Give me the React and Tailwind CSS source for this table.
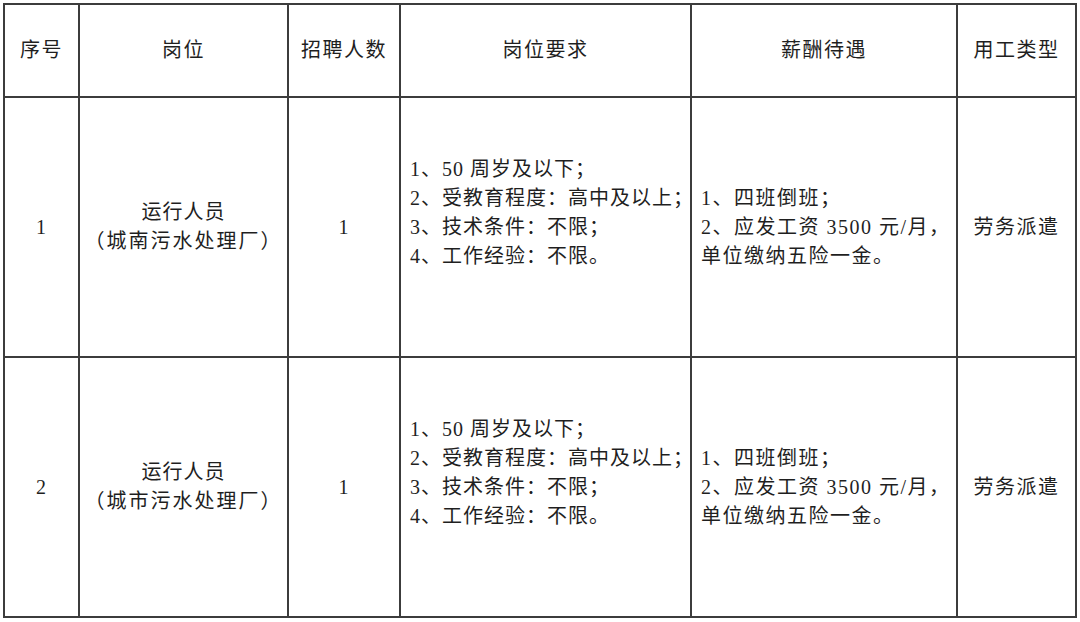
import React from "react";

const headers = ["序号", "岗位", "招聘人数", "岗位要求", "薪酬待遇", "用工类型"];

const rows = [
	{ no: "1", plant: "（城南污水处理厂）" },
	{ no: "2", plant: "（城市污水处理厂）" },
];

const requirements = [
	"1、50 周岁及以下；",
	"2、受教育程度：高中及以上；",
	"3、技术条件：不限；",
	"4、工作经验：不限。",
];

const salary = ["1、四班倒班；", "2、应发工资 3500 元/月，", "单位缴纳五险一金。"];

function Cell({ children, className = "" }) {
	return <div className={`bg-white flex items-center ${className}`}>{children}</div>;
}

function App() {
	return (
		<div
			className="w-[1080px] h-[622px] bg-white pt-[3px] pl-[3px] text-[#1f1f1f] text-[20px] tracking-[1px]"
			style={{ fontFamily: '"Liberation Serif", "Noto Sans CJK SC", serif' }}>
			<div className="inline-grid grid-cols-[73px_207px_110px_289px_264px_117px] grid-rows-[91px_258px_258px] gap-[2px] p-[2px] bg-[#3c3c3c]">
				{headers.map((h) => (
					<Cell key={h} className="justify-center">
						<span className="leading-[29px] tracking-[1.5px]">{h}</span>
					</Cell>
				))}
				{rows.map((r) => (
					<React.Fragment key={r.no}>
						<Cell className="justify-center">
							<span className="leading-[29px]">{r.no}</span>
						</Cell>
						<Cell className="justify-center">
							<div className="text-center leading-[29px] whitespace-nowrap">
								<div>运行人员</div>
								<div className="tracking-[2px]">{r.plant}</div>
							</div>
						</Cell>
						<Cell className="justify-center">
							<span className="leading-[29px]">1</span>
						</Cell>
						<Cell className="pl-[9px]">
							<div className="leading-[29px] whitespace-nowrap pb-[29px]">
								{requirements.map((l) => (
									<div key={l}>{l}</div>
								))}
							</div>
						</Cell>
						<Cell className="pl-[9px]">
							<div className="leading-[29px] whitespace-nowrap tracking-[1.5px]">
								{salary.map((l) => (
									<div key={l}>{l}</div>
								))}
							</div>
						</Cell>
						<Cell className="justify-center">
							<span className="leading-[29px] tracking-[1.5px]">劳务派遣</span>
						</Cell>
					</React.Fragment>
				))}
			</div>
		</div>
	);
}

export default App;
